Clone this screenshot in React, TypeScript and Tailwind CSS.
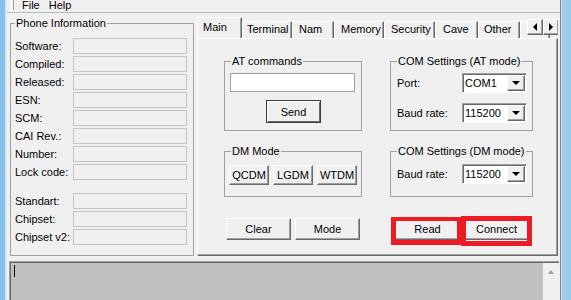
import type { ReactNode } from "react";

const raised =
  "border border-t-white border-l-white border-r-[#696969] border-b-[#696969] shadow-[inset_-1px_-1px_0_#a0a0a0] bg-[#f0f0f0]";

function Btn({ children, className = "" }: { children: ReactNode; className?: string }) {
  return (
    <div className={`flex items-center justify-center leading-[13px] ${raised} ${className}`}>{children}</div>
  );
}

function Combo({ value }: { value: string }) {
  return (
    <div className="flex h-[20px] w-[65px] border border-[#a0a0a0] border-r-white border-b-white bg-white shadow-[inset_1px_1px_0_#696969]">
      <span className="flex-1 pl-[2px] pt-[1px] leading-[17px]">{value}</span>
      <div className={`m-[1px] flex w-[18px] items-center justify-center ${raised}`}>
        <span className="h-0 w-0 border-x-[4px] border-t-[4px] border-x-transparent border-t-black" />
      </div>
    </div>
  );
}

function Group({ title, className = "", children }: { title: string; className?: string; children: ReactNode }) {
  return (
    <fieldset className={`border border-[#a0a0a0] ${className}`}>
      <legend className="ml-[6px] px-[1px] leading-[12px]">{title}</legend>
      {children}
    </fieldset>
  );
}

const phoneRows = ["Software:", "Compiled:", "Released:", "ESN:", "SCM:", "CAI Rev.:", "Number:", "Lock code:"];
const chipRows = ["Standart:", "Chipset:", "Chipset v2:"];

const tabs = [
  { label: "Terminal", w: "w-[50px]", pl: "pl-[4px]" },
  { label: "Nam", w: "w-[42px]", pl: "pl-[6px]" },
  { label: "Memory", w: "w-[50px]", pl: "pl-[6px]" },
  { label: "Security", w: "w-[51px]", pl: "pl-[6px]" },
  { label: "Cave", w: "w-[43px]", pl: "pl-[7px]" },
  { label: "Other", w: "w-[42px]", pl: "pl-[5px]" },
  { label: "Info", w: "w-[30px]", pl: "pl-[6px]" },
];

function InfoRow({ label }: { label: string }) {
  return (
    <div className="mb-[2px] flex h-[16px] items-center">
      <span className="w-[58px] leading-[16px]">{label}</span>
      <div className="h-[16px] w-[114px] border border-[#c4c4c4] bg-[#f0f0f0]" />
    </div>
  );
}

export default function App() {
  return (
    <div className="flex h-[300px] w-[571px] overflow-hidden bg-[#f0f0f0] font-['Liberation_Sans',Arial,sans-serif] text-[11px] text-black">
      {/* window frame left */}
      <div className="w-[5px] bg-[#84c1ea]" />
      <div className="w-[2px] bg-[#dde4ea]" />

      <div className="flex w-[553px] flex-col">
        {/* menu */}
        <div className="flex h-[14px] items-start border-b border-[#b9b9b9]">
          <div className="ml-[4px] h-[10px] w-[3px] border-l border-r border-l-white border-r-[#a0a0a0]" />
          <span className="ml-[8px] leading-[11px]">File</span>
          <span className="ml-[9px] leading-[11px]">Help</span>
        </div>

        <div className="flex">
          {/* Phone information */}
          <fieldset className="ml-[3px] mt-[4px] h-[239px] w-[184px] border border-[#a0a0a0]">
            <legend className="ml-[4px] px-[1px] leading-[13px]">Phone Information</legend>
            <div className="pl-[4px] pt-[8px]">
              {phoneRows.map((r) => (
                <InfoRow key={r} label={r} />
              ))}
              <div className="h-[11px]" />
              {chipRows.map((r) => (
                <InfoRow key={r} label={r} />
              ))}
            </div>
          </fieldset>

          {/* Tab control */}
          <div className="ml-[3px] mt-[4px] w-[361px]">
            <div className="relative flex h-[21px] items-end overflow-hidden">
              <div className="relative z-10 -mb-px h-[22px] w-[45px] shrink-0 border-t border-l border-r border-t-white border-l-white border-r-[#696969] bg-[#f0f0f0] pl-[5px] pt-[3px] leading-[13px] shadow-[inset_-1px_0_0_#a0a0a0]">
                Main
              </div>
              {tabs.map((t) => (
                <div
                  key={t.label}
                  className={`h-[17px] shrink-0 border-t border-l border-r border-t-white border-l-white border-r-[#696969] pt-[1px] leading-[13px] shadow-[inset_-1px_0_0_#a0a0a0] ${t.w} ${t.pl}`}
                >
                  {t.label}
                </div>
              ))}
              <div className="absolute -right-px top-[2px] z-20 flex">
                <div className={`flex h-[16px] w-[16px] items-center justify-center ${raised}`}>
                  <span className="h-0 w-0 border-y-[4px] border-r-[4px] border-y-transparent border-r-black" />
                </div>
                <div className={`flex h-[16px] w-[16px] items-center justify-center ${raised}`}>
                  <span className="h-0 w-0 border-y-[4px] border-l-[4px] border-y-transparent border-l-black" />
                </div>
              </div>
            </div>

            <div className={`h-[218px] ${raised} pl-[26px] pt-[16px]`}>
              <div className="flex">
                <Group title="AT commands" className="h-[76px] w-[138px]">
                  <div className="ml-[5px] mt-[6px] h-[19px] w-[125px] border border-[#a0a0a0] bg-white" />
                  <div className="ml-[41px] mt-[8px] flex h-[23px] w-[55px] items-center justify-center border border-[#3c3c3c] bg-[#f0f0f0] shadow-[inset_1px_1px_0_#fff,inset_-1px_-1px_0_#696969]">
                    Send
                  </div>
                </Group>
                <Group title="COM Settings (AT mode)" className="ml-[28px] h-[76px] w-[143px]">
                  <div className="ml-[6px] mt-[6px] flex h-[20px] items-center">
                    <span className="w-[65px]">Port:</span>
                    <Combo value="COM1" />
                  </div>
                  <div className="ml-[6px] mt-[10px] flex h-[20px] items-center">
                    <span className="w-[65px]">Baud rate:</span>
                    <Combo value="115200" />
                  </div>
                </Group>
              </div>

              <div className="mt-[14px] flex">
                <Group title="DM Mode" className="h-[52px] w-[138px]">
                  <div className="ml-[4px] mt-[8px] flex gap-[4px]">
                    <Btn className="h-[20px] w-[40px]">QCDM</Btn>
                    <Btn className="h-[20px] w-[40px]">LGDM</Btn>
                    <Btn className="h-[20px] w-[40px]">WTDM</Btn>
                  </div>
                </Group>
                <Group title="COM Settings (DM mode)" className="ml-[28px] h-[52px] w-[143px]">
                  <div className="ml-[6px] mt-[7px] flex h-[20px] items-center">
                    <span className="w-[65px]">Baud rate:</span>
                    <Combo value="115200" />
                  </div>
                </Group>
              </div>

              <div className="ml-[2px] mt-[21px] flex">
                <Btn className="h-[22px] w-[65px]">Clear</Btn>
                <Btn className="ml-[4px] h-[22px] w-[65px]">Mode</Btn>
                <div className="relative ml-[35px]">
                  <Btn className="h-[22px] w-[65px]">Read</Btn>
                  <div className="pointer-events-none absolute -left-[4px] -top-[1px] h-[28px] w-[71px] border-[5px] border-t-[4px] border-[#ed1c24]" />
                </div>
                <div className="relative ml-[4px]">
                  <Btn className="h-[22px] w-[65px]">Connect</Btn>
                  <div className="pointer-events-none absolute -left-[3px] -top-[2px] h-[30px] w-[71px] border-[5px] border-[#ed1c24]" />
                </div>
              </div>
            </div>
          </div>
        </div>

        {/* log memo */}
        <div className="ml-[2px] mt-[5px] flex h-[40px] w-[550px] border-t border-l border-[#a0a0a0] pl-[1px] pt-[1px] shadow-[inset_1px_1px_0_#696969]">
          <div className="flex-1 bg-[#c0c0c0] pl-[3px] pt-[2px]">
            <div className="h-[12px] w-[1px] bg-black" />
          </div>
          <div className="flex w-[16px] justify-center bg-[#f0f0f0] pt-[7px]">
            <span className="h-0 w-0 border-x-[3px] border-b-[4px] border-x-transparent border-b-[#a0a0a0]" />
          </div>
        </div>
      </div>

      {/* window frame right */}
      <div className="w-[1px] bg-[#7f7f7f]" />
      <div className="w-[1px] bg-[#dce6ee]" />
      <div className="w-[9px] bg-[#9fcbeb]" />
    </div>
  );
}
